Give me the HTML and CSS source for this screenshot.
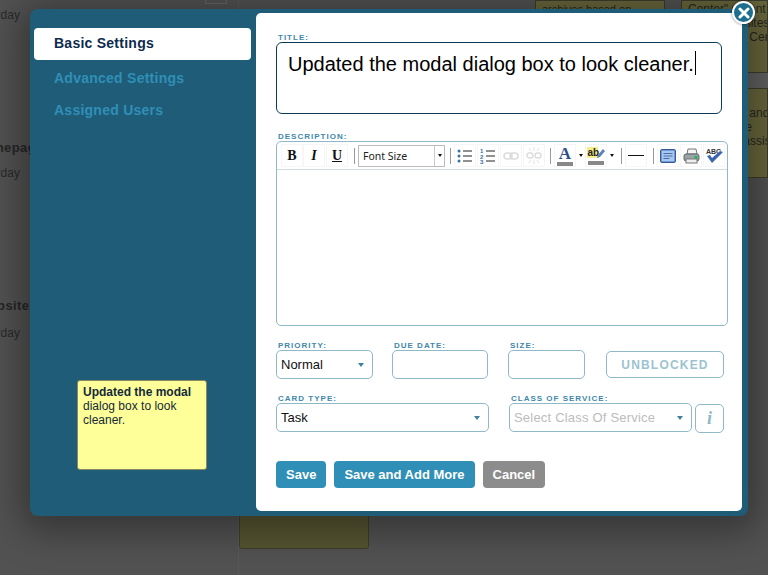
FILE: index.html
```html
<!DOCTYPE html>
<html lang="en">
<head>
    <meta charset="UTF-8">
    <meta name="viewport" content="width=device-width, initial-scale=1.0">
    <title>Edit Card</title>
    <link rel="stylesheet" href="styles.css">
</head>
<body>
    <!-- board behind the dialog, dimmed -->
    <div class="board">
        <div class="col col-left">
            <p class="lane-date lane-first">Yesterday</p>
            <p class="lane-name lane-home">Homepage</p>
            <p class="lane-date">Yesterday</p>
            <p class="lane-name lane-site">Website</p>
            <p class="lane-date lane-last">Yesterday</p>
            <div class="tab-stub"></div>
        </div>
        <div class="col col-mid">
            <div class="board-card board-card-low"></div>
        </div>
        <div class="col col-a">
            <div class="board-card board-card-top board-card-small">archives based on</div>
        </div>
        <div class="col col-b">
            <div class="board-card board-card-top board-card-text">Center" parent<br>Some websites<br>Customers Center</div>
            <div class="strip"></div>
            <div class="board-card board-card-second">Customers and<br>Web people<br>Customer assist</div>
        </div>
    </div>

    <div class="modal">
        <div class="sidebar">
            <a class="tab tab-active">Basic Settings</a>
            <a class="tab">Advanced Settings</a>
            <a class="tab">Assigned Users</a>
            <div class="sticky"><b>Updated the modal</b> dialog box to look cleaner.</div>
        </div>

        <div class="panel">
            <label class="field-label">Title:</label>
            <div class="title-input"><span>Updated the modal dialog box to look cleaner.</span><i class="caret"></i></div>

            <label class="field-label desc-label">Description:</label>
            <div class="editor">
                <div class="toolbar">
                    <button class="tool tool-b">B</button>
                    <button class="tool tool-i">I</button>
                    <button class="tool tool-u">U</button>
                    <span class="sep"></span>
                    <div class="font-select"><span>Font Size</span><em></em></div>
                    <span class="sep"></span>
                    <button class="tool">
                        <svg width="18" height="16" viewBox="0 0 18 16"><g fill="#3b6ea5"><circle cx="3" cy="3" r="1.5"/><circle cx="3" cy="8" r="1.5"/><circle cx="3" cy="13" r="1.5"/></g><path d="M7 3h9M7 8h9M7 13h9" stroke="#222" stroke-width="1"/></svg>
                    </button>
                    <button class="tool">
                        <svg width="18" height="16" viewBox="0 0 18 16"><g fill="#3b6ea5" font-size="6" font-weight="bold" font-family="Liberation Sans"><text x="1" y="5">1</text><text x="1" y="10.5">2</text><text x="1" y="16">3</text></g><path d="M7 3h9M7 8h9M7 13h9" stroke="#222" stroke-width="1"/></svg>
                    </button>
                    <button class="tool">
                        <svg width="16" height="10" viewBox="0 0 16 10"><g fill="none" stroke="#dcdcdc" stroke-width="1.6"><rect x="1" y="2" width="8" height="6" rx="3"/><rect x="7" y="2" width="8" height="6" rx="3"/></g></svg>
                    </button>
                    <button class="tool">
                        <svg width="16" height="19" viewBox="0 0 16 19"><g fill="none" stroke="#dcdcdc" stroke-width="1.4"><rect x="1" y="7" width="6" height="5" rx="2.500"/><rect x="9" y="7" width="6" height="5" rx="2.500"/></g><path d="M8 1v4M8 14v4M3 2l2 3M13 2l-2 3M3 17l2-3M13 17l-2-3" stroke="#e2e2e2"/></svg>
                    </button>
                    <span class="sep sep-wide"></span>
                    <button class="tool tool-color"><span class="letter-a">A</span><i class="color-bar"></i></button>
                    <em class="mini-arrow"></em>
                    <button class="tool tool-color">
                        <svg width="18" height="13" viewBox="0 0 18 13"><rect x="0" y="0" width="11" height="11" fill="#f3ef8a"/><text x="0.5" y="9" font-size="10" font-family="Liberation Sans" fill="#222">ab</text><path d="M10 11l1-3 5-6 2 2-5 6z" fill="#5b7fb5"/></svg>
                        <i class="color-bar"></i>
                    </button>
                    <em class="mini-arrow"></em>
                    <span class="sep"></span>
                    <button class="tool tool-hr"><i></i></button>
                    <span class="sep"></span>
                    <button class="tool">
                        <svg width="16" height="14" viewBox="0 0 16 14"><rect x="0.500" y="0.500" width="15" height="13" rx="1.500" fill="#6f9bdc" stroke="#37598f"/><rect x="2" y="2" width="12" height="10" fill="#a9c6ee"/><path d="M3.500 4.500h9M3.500 7h9M3.500 9.500h6" stroke="#4a6fa8"/></svg>
                    </button>
                    <button class="tool">
                        <svg width="17" height="16" viewBox="0 0 17 16"><path d="M5 1h8l1 5H4z" fill="#f4f4f4" stroke="#777"/><rect x="1" y="6" width="15" height="7" rx="2" fill="#9aa3a8" stroke="#5f676b"/><rect x="3" y="11" width="11" height="4" fill="#eee" stroke="#777"/><rect x="11.500" y="8" width="3" height="2.500" fill="#27b34a"/></svg>
                    </button>
                    <button class="tool">
                        <svg width="19" height="18" viewBox="0 0 19 18"><text x="1" y="7" font-size="7" font-weight="bold" font-family="Liberation Sans" fill="#333">ABC</text><path d="M2 9l5 7L18 5l-3-1-8 7-2-3z" fill="#3d66b0"/></svg>
                    </button>
                </div>
                <div class="editor-body"></div>
            </div>

            <div class="form-row row-one">
                <div class="group w-priority">
                    <label class="field-label">Priority:</label>
                    <div class="select-box">Normal<em></em></div>
                </div>
                <div class="group w-date">
                    <label class="field-label">Due Date:</label>
                    <div class="text-box"></div>
                </div>
                <div class="group w-size">
                    <label class="field-label">Size:</label>
                    <div class="text-box"></div>
                </div>
                <button class="unblocked">UNBLOCKED</button>
            </div>

            <div class="form-row row-two">
                <div class="group w-type">
                    <label class="field-label">Card Type:</label>
                    <div class="select-box">Task<em></em></div>
                </div>
                <div class="group w-class">
                    <label class="field-label">Class of Service:</label>
                    <div class="select-box select-muted">Select Class Of Service<em></em></div>
                </div>
                <button class="info-btn">i</button>
            </div>

            <div class="actions">
                <button class="btn">Save</button>
                <button class="btn">Save and Add More</button>
                <button class="btn btn-cancel">Cancel</button>
            </div>
        </div>

        <button class="close-btn">
            <svg width="12" height="12" viewBox="0 0 12 12"><path d="M2 2l8 8M10 2l-8 8" stroke="#fff" stroke-width="3" stroke-linecap="round"/></svg>
        </button>
    </div>
</body>
</html>
```

FILE: styles.css
```css
* {
    box-sizing: border-box;
}
html, body {
    margin: 0;
    height: 100%;
    overflow: hidden;
}
body {
    font-family: "Liberation Sans", Arial, sans-serif;
    background-color: #525252;
}

/* board behind the dialog */
.board {
    display: flex;
    height: 575px;
    overflow: hidden;
    color: #1f1f1f;
}
.col {
    display: flex;
    flex-direction: column;
    flex-shrink: 0;
}
.col-left {
    width: 239px;
    overflow: hidden;
    position: relative;
    border-right: 1px solid #585858;
}
.col-mid {
    width: 296px;
    justify-content: flex-end;
    padding-bottom: 26px;
}
.col-a {
    width: 146px;
}
.col-b {
    width: 87px;
}
.lane-date, .lane-name {
    margin: 0;
    white-space: nowrap;
    font-size: 12px;
    line-height: 14px;
    color: #2a2a2a;
}
.lane-date {
    margin-left: -33px;
    margin-top: 11px;
}
.lane-first {
    margin-top: 8px;
}
.lane-last {
    margin-top: 13px;
}
.lane-name {
    font-weight: bold;
    font-size: 13px;
    letter-spacing: 0.4px;
    color: #262626;
    margin-top: 119px;
}
.lane-home {
    margin-left: -26px;
}
.lane-site {
    margin-left: -23px;
}
.tab-stub {
    position: absolute;
    top: -6px;
    left: 205px;
    width: 22px;
    height: 10px;
    border: 1px solid #666;
}
.board-card {
    width: 130px;
    background-color: #68663c;
    border: 1px solid #3d3d2c;
    font-size: 12px;
    line-height: 14px;
    padding: 0 6px;
    color: #26261c;
    overflow: hidden;
    white-space: nowrap;
}
.board-card-low {
    height: 70px;
    background-color: #565532;
    border-radius: 3px;
}
.board-card-top {
    height: 73px;
    padding-top: 1px;
}
.board-card-small {
    font-size: 11px;
}
.board-card-text {
    width: 100%;
}
.strip {
    height: 15px;
    background-color: #616161;
}
.board-card-second {
    width: 100%;
    height: 90px;
    padding-top: 17px;
}

/* dialog */
.modal {
    position: absolute;
    left: 30px;
    top: 9px;
    width: 718px;
    height: 507px;
    display: flex;
    padding: 4px 6px 5px 0;
    background-color: #1f5c78;
    border-radius: 8px;
    box-shadow: 0 6px 36px 10px rgba(0, 0, 0, 0.35);
}
.sidebar {
    width: 226px;
    flex-shrink: 0;
    display: flex;
    flex-direction: column;
    padding: 15px 5px 0 4px;
}
.tab {
    display: block;
    height: 32px;
    line-height: 31px;
    padding-left: 20px;
    font-size: 14px;
    font-weight: bold;
    letter-spacing: 0.25px;
    color: #2f8fb6;
}
.tab-active {
    background-color: #fff;
    color: #0d2b4e;
    border-radius: 4px;
    margin-bottom: 3px;
}
.sticky {
    width: 130px;
    height: 90px;
    margin: auto 0 41px 43px;
    padding: 4px 5px;
    font-size: 12px;
    line-height: 14px;
    color: #14293a;
    background-color: #ffff99;
    border: 1px solid #8a8a60;
    border-radius: 3px;
}
.panel {
    flex: 1;
    background-color: #fff;
    border-radius: 5px;
    padding: 20px 14px 0 20px;
}
.field-label {
    display: block;
    height: 9px;
    padding-left: 2px;
    font-size: 8px;
    line-height: 9px;
    font-weight: bold;
    letter-spacing: 1px;
    text-transform: uppercase;
    color: #3f88ab;
}
.title-input {
    width: 446px;
    height: 72px;
    padding: 6px 11px;
    font-size: 20px;
    line-height: 30px;
    color: #000;
    border: 1px solid #0d3a55;
    border-radius: 6px;
    white-space: nowrap;
}
.caret {
    display: inline-block;
    width: 1px;
    height: 24px;
    margin-left: 1px;
    vertical-align: -4px;
    background-color: #000;
}
.desc-label {
    margin-top: 18px;
}

/* editor */
.editor {
    width: 452px;
    height: 185px;
    display: flex;
    flex-direction: column;
    border: 1px solid #8fb9c8;
    border-radius: 5px;
}
.toolbar {
    display: flex;
    align-items: center;
    height: 28px;
    padding-left: 4px;
    border-bottom: 1px solid #d3dbde;
    flex-shrink: 0;
}
.tool {
    width: 22px;
    height: 23px;
    margin-right: 1px;
    padding: 0;
    display: flex;
    flex-direction: column;
    align-items: center;
    justify-content: center;
    flex-shrink: 0;
    background: #fff;
    border: 1px solid #f6f6f6;
    font-family: "Liberation Serif", serif;
    font-size: 14px;
    font-weight: bold;
    color: #111;
}
.tool-b {
    margin-right: 0;
}
.tool-i {
    font-style: italic;
}
.tool-u {
    text-decoration: underline;
}
.sep {
    width: 1px;
    height: 16px;
    margin: 0 3px 0 5px;
    flex-shrink: 0;
    background-color: #999;
}
.sep-wide {
    margin: 0 3px 0 4px;
}
.font-select {
    width: 87px;
    height: 22px;
    display: flex;
    align-items: center;
    justify-content: space-between;
    padding-left: 4px;
    flex-shrink: 0;
    font-family: "Noto Sans", sans-serif;
    font-size: 10.500px;
    color: #222;
    border: 1px solid #bbb;
}
.font-select em {
    display: flex;
    align-items: center;
    justify-content: center;
    width: 10px;
    height: 100%;
    border-left: 1px solid #ccc;
}
.font-select em::after, .mini-arrow::after {
    content: "";
    border-left: 2.500px solid transparent;
    border-right: 2.500px solid transparent;
    border-top: 3px solid #111;
}
.mini-arrow {
    display: flex;
    justify-content: center;
    width: 9px;
    flex-shrink: 0;
    margin: 0 0 0 -1px;
}
.tool-color {
    justify-content: flex-start;
    padding-top: 2px;
}
.letter-a {
    font-size: 17px;
    line-height: 14px;
    color: #2f4f8a;
    font-family: "Liberation Serif", serif;
}
.color-bar {
    display: block;
    width: 16px;
    height: 4px;
    margin-top: 1px;
    background-color: #888;
}
.tool-hr i {
    display: block;
    width: 16px;
    height: 1px;
    background-color: #111;
}
.editor-body {
    flex: 1;
}

/* form rows */
.form-row {
    display: flex;
    align-items: flex-end;
    margin-top: 15px;
}
.text-box, .select-box {
    height: 29px;
    background-color: #fff;
    border: 1px solid #8fb9c8;
    border-radius: 5px;
}
.select-box {
    position: relative;
    padding: 0 4px;
    font-size: 13px;
    line-height: 27px;
    color: #111;
}
.select-box em {
    position: absolute;
    right: 8px;
    top: 12px;
    border-left: 3px solid transparent;
    border-right: 3px solid transparent;
    border-top: 4px solid #3f7f9c;
}
.select-muted {
    color: #bcbcbc;
    letter-spacing: 0.2px;
}
.w-priority {
    width: 97px;
    margin-right: 19px;
}
.w-date {
    width: 96px;
    margin-right: 20px;
}
.w-size {
    width: 77px;
    margin-right: 21px;
}
.w-type {
    width: 213px;
    margin-right: 20px;
}
.w-class {
    width: 183px;
    margin-right: 3px;
}
.unblocked {
    width: 118px;
    height: 27px;
    margin-bottom: 1px;
    padding: 0;
    font-family: inherit;
    font-size: 12px;
    font-weight: bold;
    letter-spacing: 1.200px;
    color: #9cc3d0;
    background: #fff;
    border: 1px solid #8fb9c8;
    border-radius: 5px;
}
.info-btn {
    width: 29px;
    height: 29px;
    margin-bottom: -1px;
    padding: 0;
    font-family: "Liberation Serif", serif;
    font-size: 18px;
    font-weight: bold;
    font-style: italic;
    color: #8db8c8;
    background: #fff;
    border: 1px solid #8fb9c8;
    border-radius: 5px;
}
.actions {
    display: flex;
    gap: 8px;
    margin-top: 29px;
}
.btn {
    height: 27px;
    padding: 0 10px;
    font-family: inherit;
    font-size: 13px;
    font-weight: bold;
    color: #fff;
    background-color: #2f8fb6;
    border: none;
    border-radius: 4px;
}
.btn-cancel {
    background-color: #8c8c8c;
}
.close-btn {
    position: absolute;
    right: -7px;
    top: -8px;
    width: 23px;
    height: 23px;
    display: flex;
    align-items: center;
    justify-content: center;
    padding: 0;
    background-color: #1c6f8e;
    border: 2px solid #fff;
    border-radius: 50%;
    box-shadow: 0 0 3px rgba(0, 0, 0, 0.5);
}
```
